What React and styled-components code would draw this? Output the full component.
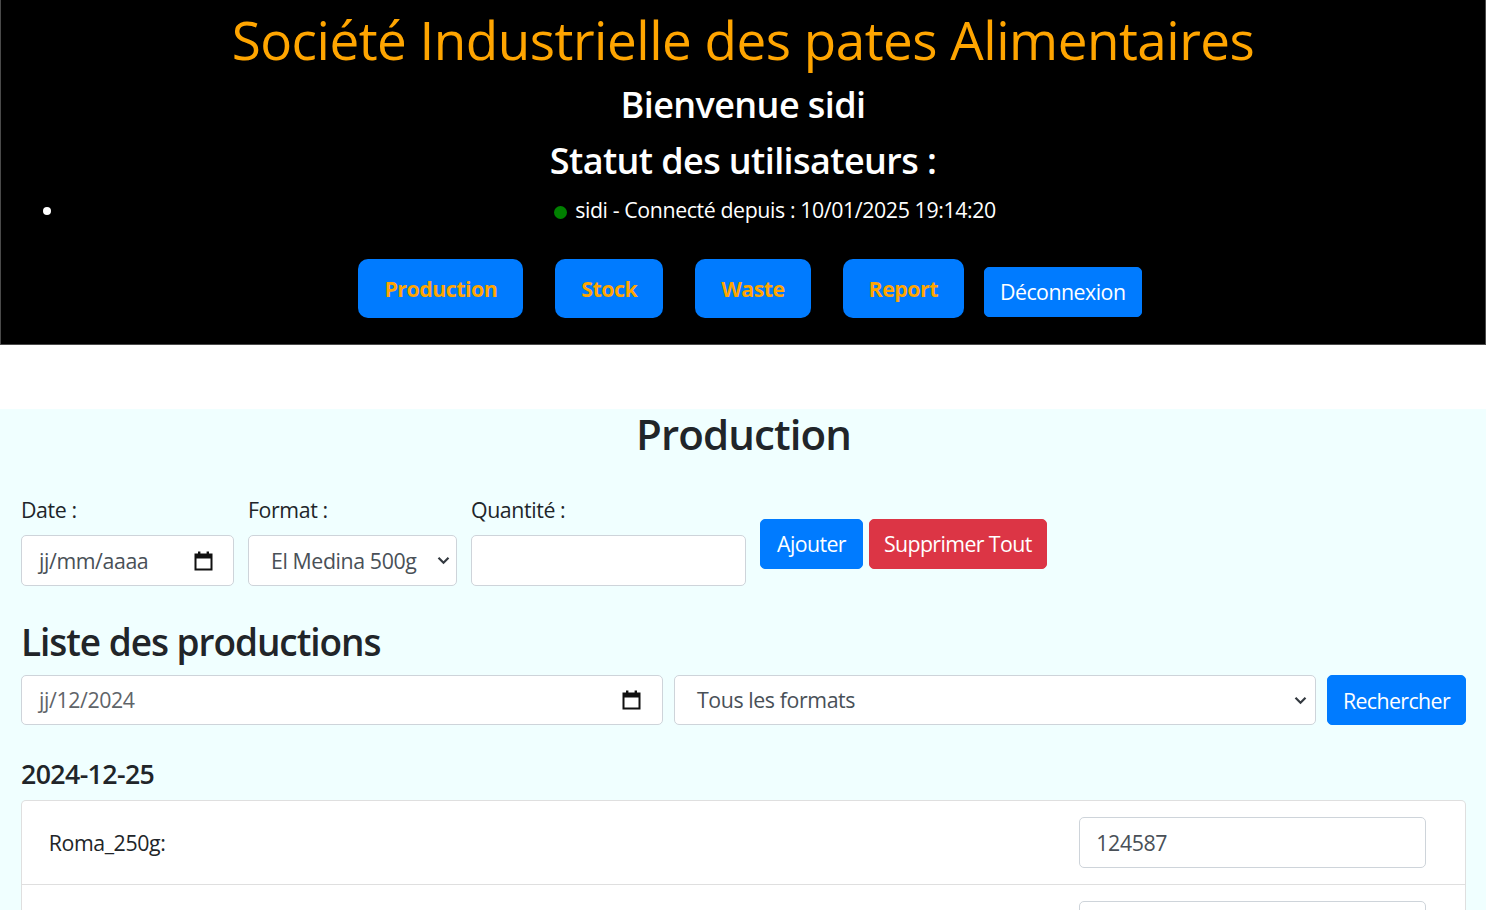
import React from "react";
import styled, { createGlobalStyle } from "styled-components";

const Global = createGlobalStyle`
  html, body { margin: 0; padding: 0; background: #fff; }
  body {
    font-family: "Open Sans", "Noto Sans", "Liberation Sans", sans-serif;
    font-size: 21.33px;
    line-height: 1.5;
    color: #212529;
  }
  * { box-sizing: border-box; }
`;

const Page = styled.div`
  width: 1486px;
`;

const Header = styled.header`
  background: #000;
  border: 1px solid #4a4a4a;
  border-top: none;
  height: 345px;
  padding-top: 8px;
  text-align: center;
`;

const Title = styled.h1`
  margin: 0 0 10.7px;
  font-size: 53px;
  line-height: 1.2;
  font-weight: 400;
  color: #ffa500;
  letter-spacing: -0.5px;
`;

const SubTitle = styled.h3`
  margin: 0 0 10.7px;
  font-size: 36px;
  line-height: 1.25;
  font-weight: 600;
  color: #fff;
  letter-spacing: -0.6px;
`;

const StatusList = styled.ul`
  margin: 0 0 21px;
  padding-left: 64px;
  color: #fff;
  list-style: disc;
`;

const StatusItem = styled.li`
  text-align: center;
  font-size: 21.33px;
  line-height: 32px;
  letter-spacing: -0.4px;
`;

const Dot = styled.span`
  display: inline-block;
  width: 13px;
  height: 13px;
  border-radius: 50%;
  background: #008000;
  margin-right: 8px;
  vertical-align: -1px;
`;

const NavBar = styled.nav`
  display: flex;
  justify-content: center;
  align-items: flex-end;
  padding-left: 14px;
  margin-top: 33px;
`;

const NavButton = styled.button`
  font-family: inherit;
  font-size: 21.33px;
  font-weight: 700;
  letter-spacing: -0.5px;
  color: #ffa500;
  background: #007bff;
  border: none;
  border-radius: 10px;
  height: 59px;
  padding: 0 26px;
  margin-right: 32px;
  cursor: pointer;
`;

const LogoutButton = styled.button`
  font-family: inherit;
  font-size: 21.33px;
  letter-spacing: -0.5px;
  color: #fff;
  background: #007bff;
  border: 1px solid #007bff;
  border-radius: 5px;
  height: 50px;
  padding: 0 15px;
  margin-left: -12px;
  margin-bottom: 1px;
`;

const Spacer = styled.div`
  height: 64px;
`;

const Section = styled.section`
  background: #f0ffff;
  padding: 0 20px 0 21px;
  min-height: 520px;
`;

const SectionTitle = styled.h2`
  margin: 0 0 10.7px;
  text-align: center;
  font-size: 42px;
  line-height: 1.2;
  font-weight: 600;
  letter-spacing: -0.9px;
`;

const AddForm = styled.form`
  display: flex;
  align-items: center;
  margin-top: 35px;
`;

const Field = styled.div`
  display: flex;
  flex-direction: column;
  width: ${(p) => p.$w}px;
  margin-right: 14px;
`;

const Label = styled.label`
  font-size: 21.33px;
  line-height: 32px;
  margin-bottom: 9px;
  letter-spacing: -0.4px;
`;

const Control = styled.div`
  display: flex;
  align-items: center;
  justify-content: space-between;
  height: ${(p) => p.$h || 51}px;
  width: ${(p) => (p.$w ? `${p.$w}px` : "100%")};
  padding: 0 ${(p) => p.$pr || 16}px 0 ${(p) => p.$pl || 16}px;
  background: #fff;
  border: 1px solid #ced4da;
  border-radius: 5px;
  color: #495057;
  font-size: 21.33px;
  letter-spacing: -0.4px;
`;

const ControlText = styled.span`
  color: ${(p) => (p.$muted ? "#5f6469" : "#495057")};
`;

const Btn = styled.button`
  font-family: inherit;
  font-size: 21.33px;
  letter-spacing: -0.6px;
  color: #fff;
  background: ${(p) => (p.$danger ? "#dc3545" : "#007bff")};
  border: 1px solid ${(p) => (p.$danger ? "#dc3545" : "#007bff")};
  border-radius: 5px;
  height: ${(p) => p.$h || 50}px;
  padding: 0 ${(p) => p.$px || 16}px;
  margin-right: ${(p) => p.$mr || 0}px;
  margin-top: ${(p) => p.$mt || 0}px;
`;

const ListTitle = styled.h3`
  margin: 34px 0 10.7px;
  font-size: 37px;
  line-height: 1.2;
  font-weight: 600;
  letter-spacing: -1.05px;
`;

const FilterRow = styled.div`
  display: flex;
  align-items: center;
  gap: 11px;
  margin-bottom: 33px;
`;

const DateTitle = styled.h5`
  margin: 0 0 10px;
  font-size: 26.7px;
  line-height: 32px;
  font-weight: 600;
  letter-spacing: -0.6px;
`;

const Card = styled.div`
  background: #fff;
  border: 1px solid rgba(0, 0, 0, 0.125);
  border-radius: 5px;
  width: 1445px;
`;

const Row = styled.div`
  display: flex;
  align-items: center;
  justify-content: space-between;
  padding: 16px 26.7px;
  border-top: ${(p) => (p.$first ? "none" : "1px solid rgba(0,0,0,0.125)")};
`;

const RowLabel = styled.span`
  font-size: 21.33px;
  letter-spacing: -0.4px;
`;

const RowInput = styled(Control)`
  width: 347px;
  margin-right: 12px;
`;

const CalendarIcon = () => (
  <svg width="19" height="20" viewBox="0 0 19 20">
    <rect x="1.5" y="3.5" width="16" height="15" fill="none" stroke="#111" strokeWidth="2" />
    <rect x="1.5" y="3.5" width="16" height="4" fill="#111" />
    <rect x="4" y="0.5" width="2.4" height="4" fill="#111" />
    <rect x="12.6" y="0.5" width="2.4" height="4" fill="#111" />
  </svg>
);

const Chevron = () => (
  <svg width="13" height="9" viewBox="0 0 13 9">
    <path d="M1.5 1.8 L6.5 6.8 L11.5 1.8" fill="none" stroke="#343a40" strokeWidth="2.2" />
  </svg>
);

export default function App() {
  return (
    <Page>
      <Global />
      <Header>
        <Title>Société Industrielle des pates Alimentaires</Title>
        <SubTitle>Bienvenue sidi</SubTitle>
        <SubTitle>Statut des utilisateurs :</SubTitle>
        <StatusList>
          <StatusItem>
            <Dot />
            sidi - Connecté depuis : 10/01/2025 19:14:20
          </StatusItem>
        </StatusList>
        <NavBar>
          <NavButton>Production</NavButton>
          <NavButton>Stock</NavButton>
          <NavButton>Waste</NavButton>
          <NavButton>Report</NavButton>
          <LogoutButton>Déconnexion</LogoutButton>
        </NavBar>
      </Header>
      <Spacer />
      <Section>
        <SectionTitle>Production</SectionTitle>
        <AddForm onSubmit={(e) => e.preventDefault()}>
          <Field $w={213}>
            <Label>Date :</Label>
            <Control $pl={17} $pr={20}>
              <ControlText>jj/mm/aaaa</ControlText>
              <CalendarIcon />
            </Control>
          </Field>
          <Field $w={209}>
            <Label>Format :</Label>
            <Control $pl={22} $pr={6}>
              <ControlText>El Medina 500g</ControlText>
              <Chevron />
            </Control>
          </Field>
          <Field $w={275}>
            <Label>Quantité :</Label>
            <Control />
          </Field>
          <Btn $mr={6} $mt={7}>Ajouter</Btn>
          <Btn $danger $mt={7} $px={14}>Supprimer Tout</Btn>
        </AddForm>
        <ListTitle>Liste des productions</ListTitle>
        <FilterRow>
          <Control $h={50} $w={642} $pl={17} $pr={21}>
            <ControlText $muted>jj/12/2024</ControlText>
            <CalendarIcon />
          </Control>
          <Control $h={50} $w={642} $pl={22} $pr={8}>
            <ControlText>Tous les formats</ControlText>
            <Chevron />
          </Control>
          <Btn $h={50} $px={15}>Rechercher</Btn>
        </FilterRow>
        <DateTitle>2024-12-25</DateTitle>
        <Card>
          <Row $first>
            <RowLabel>Roma_250g:</RowLabel>
            <RowInput $h={51}>
              <ControlText>124587</ControlText>
            </RowInput>
          </Row>
          <Row>
            <RowLabel>El Medina 500g:</RowLabel>
            <RowInput $h={51}>
              <ControlText>98540</ControlText>
            </RowInput>
          </Row>
        </Card>
      </Section>
    </Page>
  );
}
